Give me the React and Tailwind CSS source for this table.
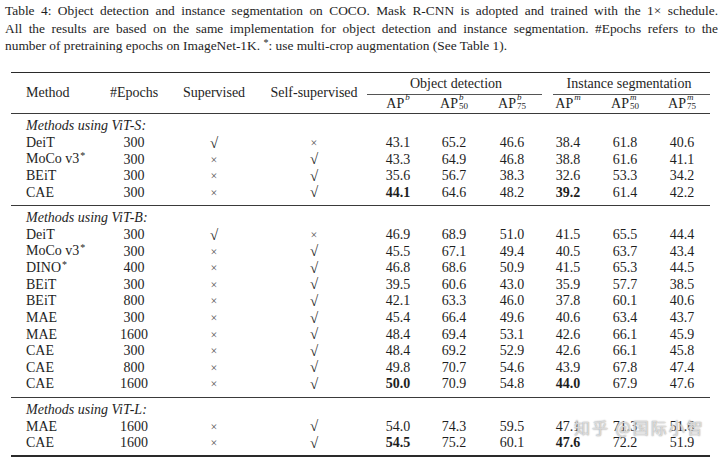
import React from 'react';

const cols = 'grid grid-cols-[85px_76px_84px_116px_52px_60px_56px_56px_58px_56px]';

// '!' in front of a value means bold
const sections = [
  {
    label: 'ViT-S',
    rows: [
      ['DeiT', '300', true, ['43.1', '65.2', '46.6', '38.4', '61.8', '40.6']],
      ['MoCo v3*', '300', false, ['43.3', '64.9', '46.8', '38.8', '61.6', '41.1']],
      ['BEiT', '300', false, ['35.6', '56.7', '38.3', '32.6', '53.3', '34.2']],
      ['CAE', '300', false, ['!44.1', '64.6', '48.2', '!39.2', '61.4', '42.2']],
    ],
  },
  {
    label: 'ViT-B',
    rows: [
      ['DeiT', '300', true, ['46.9', '68.9', '51.0', '41.5', '65.5', '44.4']],
      ['MoCo v3*', '300', false, ['45.5', '67.1', '49.4', '40.5', '63.7', '43.4']],
      ['DINO*', '400', false, ['46.8', '68.6', '50.9', '41.5', '65.3', '44.5']],
      ['BEiT', '300', false, ['39.5', '60.6', '43.0', '35.9', '57.7', '38.5']],
      ['BEiT', '800', false, ['42.1', '63.3', '46.0', '37.8', '60.1', '40.6']],
      ['MAE', '300', false, ['45.4', '66.4', '49.6', '40.6', '63.4', '43.7']],
      ['MAE', '1600', false, ['48.4', '69.4', '53.1', '42.6', '66.1', '45.9']],
      ['CAE', '300', false, ['48.4', '69.2', '52.9', '42.6', '66.1', '45.8']],
      ['CAE', '800', false, ['49.8', '70.7', '54.6', '43.9', '67.8', '47.4']],
      ['CAE', '1600', false, ['!50.0', '70.9', '54.8', '!44.0', '67.9', '47.6']],
    ],
  },
  {
    label: 'ViT-L',
    rows: [
      ['MAE', '1600', false, ['54.0', '74.3', '59.5', '47.1', '71.3', '51.6']],
      ['CAE', '1600', false, ['!54.5', '75.2', '60.1', '!47.6', '72.2', '51.9']],
    ],
  },
];

function Ap({ sup, sub }) {
  return (
    <span className="inline-flex items-center">
      <span>AP</span>
      <span className="inline-flex flex-col text-[9px] leading-[9px] italic ml-[1px] -mt-[2px]">
        <span>{sup}</span>
        <span className="not-italic">{sub || '\u00a0'}</span>
      </span>
    </span>
  );
}

function Name({ text }) {
  if (text.endsWith('*')) {
    return (
      <span>
        {text.slice(0, -1)}
        <span className="text-[10px] relative -top-[4px] ml-[1px]">*</span>
      </span>
    );
  }
  return <span>{text}</span>;
}

function Mark({ ok }) {
  return ok ? <span className="text-[15px]">√</span> : <span className="text-[12px] text-[#555]">×</span>;
}

function Row({ row }) {
  const [name, epochs, sup, vals] = row;
  return (
    <div className={`${cols} h-[16.6px] items-center leading-[16.6px]`}>
      <div className="pl-[15px]"><Name text={name} /></div>
      <div className="text-center">{epochs}</div>
      <div className="text-center"><Mark ok={sup} /></div>
      <div className="text-center"><Mark ok={!sup} /></div>
      {vals.map((v, i) => (
        <div key={i} className={`text-center ${v.startsWith('!') ? 'font-bold' : ''}`}>
          {v.replace('!', '')}
        </div>
      ))}
    </div>
  );
}

export default function App() {
  return (
    <div className="relative w-[720px] h-[461px] overflow-hidden bg-white text-[#1e1e1e] font-['Liberation_Serif',serif] text-[14px]">
      {/* caption, one block per line so the breaks match */}
      <div className="pl-[5px] pr-[2px] pt-[2px] leading-[17.5px] text-[13.4px] whitespace-nowrap">
        <div className="text-justify [text-align-last:justify]">
          Table 4: Object detection and instance segmentation on COCO. Mask R-CNN is adopted and trained with the 1× schedule.
        </div>
        <div className="text-justify [text-align-last:justify]">
          All the results are based on the same implementation for object detection and instance segmentation. #Epochs refers to the
        </div>
        <div>
          number of pretraining epochs on ImageNet-1K. <span className="text-[10px] relative -top-[4px]">*</span>: use multi-crop augmentation (See Table 1).
        </div>
      </div>

      <div className="ml-[11px] w-[699px] mt-[16px]">
        {/* header */}
        <div className={`${cols} border-t-[1.5px] border-[#2a2a2a] grid-rows-[20.5px_20px]`}>
          <div className="row-span-2 flex items-center pl-[15px]">Method</div>
          <div className="row-span-2 flex items-center justify-center">#Epochs</div>
          <div className="row-span-2 flex items-center justify-center">Supervised</div>
          <div className="row-span-2 flex items-center justify-center">Self-supervised</div>
          <div className="col-span-3 flex flex-col">
            <div className="flex-1 flex items-center justify-center">Object detection</div>
            <div className="border-b border-[#555] ml-[-5px] mr-[-2px]" />
          </div>
          <div className="col-span-3 flex flex-col">
            <div className="flex-1 flex items-center justify-center pl-[8px]">Instance segmentation</div>
            <div className="border-b border-[#555] ml-[13px]" />
          </div>
          <div className="flex items-center justify-center"><Ap sup="b" /></div>
          <div className="flex items-center justify-center"><Ap sup="b" sub="50" /></div>
          <div className="flex items-center justify-center"><Ap sup="b" sub="75" /></div>
          <div className="flex items-center justify-center"><Ap sup="m" /></div>
          <div className="flex items-center justify-center"><Ap sup="m" sub="50" /></div>
          <div className="flex items-center justify-center"><Ap sup="m" sub="75" /></div>
        </div>

        {sections.map((s) => (
          <div key={s.label} className="border-t border-[#3a3a3a] py-[4px]">
            <div className="h-[16.6px] leading-[16.6px] pl-[15px] italic">Methods using {s.label}:</div>
            {s.rows.map((r, i) => (
              <Row key={i} row={r} />
            ))}
          </div>
        ))}
        <div className="border-t-2 border-[#2a2a2a]" />
      </div>

      {/* watermark */}
      <div className="absolute left-[574px] top-[415px] whitespace-nowrap text-[16px] tracking-[2px] font-['Noto_Sans_CJK_SC',sans-serif] text-white/60 [text-shadow:0_0_1px_#999,0_0_2px_#bbb]">
        知乎 @国际小智
      </div>
    </div>
  );
}
